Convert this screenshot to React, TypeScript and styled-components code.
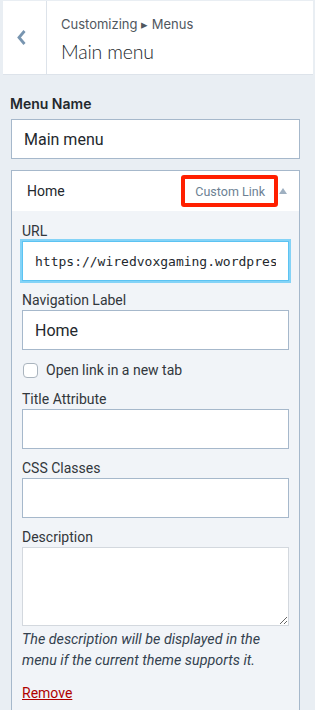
import React from "react";
import styled, { createGlobalStyle } from "styled-components";

const Global = createGlobalStyle`
  html, body { margin: 0; padding: 0; }
  body {
    background: #e9eef3;
    font-family: Roboto, "Noto Sans", "Liberation Sans", sans-serif;
    color: #32373c;
    width: 315px;
    height: 710px;
    overflow: hidden;
  }
  * { box-sizing: border-box; }
`;

const Page = styled.div`
  display: flex;
  flex-direction: column;
  width: 315px;
  height: 710px;
  background: #e9eef3;
`;

const Header = styled.header`
  display: flex;
  height: 74px;
  margin: 1px 2px 0 3px;
  background: #fff;
  border-bottom: 1px solid #dde3ea;
`;

const BackButton = styled.button`
  width: 44px;
  flex: none;
  display: flex;
  align-items: center;
  justify-content: center;
  padding: 0 6px 0 0;
  background: #fff;
  border: none;
  border-right: 1px solid #dde3ea;
  color: #7895b0;
`;

const TitleBlock = styled.div`
  display: flex;
  flex-direction: column;
  padding: 13px 0 0 14px;
`;

const Crumb = styled.span`
  font-family: Inter, Roboto, sans-serif;
  font-size: 13px;
  line-height: 20px;
  color: #50575e;
`;

const Title = styled.h1`
  margin: 5px 0 0;
  font-family: Lato, Roboto, sans-serif;
  font-size: 19.5px;
  line-height: 26px;
  font-weight: 300;
  letter-spacing: -0.2px;
  color: #23282d;
`;

const Content = styled.div`
  display: flex;
  flex-direction: column;
  padding: 19px 15px 0 11px;
  flex: 1;
`;

const SectionLabel = styled.label`
  font-family: Inter, Roboto, sans-serif;
  font-size: 14px;
  line-height: 20px;
  font-weight: 600;
  color: #23282d;
  margin-bottom: 5px;
  margin-left: -1px;
`;

const NameInput = styled.input`
  height: 40px;
  width: 100%;
  border: 1px solid #a6b8cb;
  background: #fff;
  padding: 0 12px;
  font-family: inherit;
  font-size: 16px;
  color: #23282d;
  outline: none;
`;

const ItemPanel = styled.div`
  margin-top: 11px;
  border: 1px solid #a6b8cb;
  border-bottom: none;
  flex: 1;
  display: flex;
  flex-direction: column;
  background: #f1f4f8;
`;

const ItemHeader = styled.div`
  height: 40px;
  background: #fff;
  display: flex;
  align-items: center;
  padding: 0 12px 0 15px;
`;

const ItemTitle = styled.span`
  flex: 1;
  font-size: 14px;
  color: #23282d;
`;

const ItemType = styled.span`
  font-size: 12.5px;
  color: #6c7f93;
  border: 4px solid #ff1f00;
  border-radius: 3px;
  height: 32px;
  display: flex;
  align-items: center;
  padding: 0 9px 0 10px;
  margin-right: 1px;
`;

const Toggle = styled.span`
  width: 0;
  height: 0;
  border-left: 4px solid transparent;
  border-right: 4px solid transparent;
  border-bottom: 6px solid #9fb0c1;
  margin-top: -1px;
`;

const ItemBody = styled.div`
  display: flex;
  flex-direction: column;
  gap: 10px;
  padding: 11px 10px 0 10px;
`;

const Field = styled.div`
  display: flex;
  flex-direction: column;
`;

const FieldLabel = styled.label`
  font-size: 14px;
  line-height: 19px;
  color: #32373c;
`;

const TextInput = styled.input<{ $mono?: boolean; $focused?: boolean }>`
  height: 40px;
  width: 100%;
  background: #fff;
  border: 1px solid ${(p) => (p.$focused ? "#5cc3f2" : "#a6b8cb")};
  box-shadow: ${(p) => (p.$focused ? "0 0 0 2px #84d3f7" : "none")};
  padding: 0 12px;
  font-family: ${(p) =>
    p.$mono ? '"DejaVu Sans Mono", "Liberation Mono", monospace' : "inherit"};
  font-size: ${(p) => (p.$mono ? "13px" : "16px")};
  color: #23282d;
  outline: none;
`;

const TextArea = styled.textarea`
  height: 79px;
  width: 100%;
  background: #fff;
  border: 1px solid #d3d8de;
  resize: vertical;
  font-family: inherit;
  font-size: 14px;
  outline: none;
  display: block;
`;

const CheckRow = styled.label`
  display: flex;
  align-items: center;
  gap: 8px;
  height: 20px;
  font-size: 14px;
  color: #32373c;
  padding-left: 1px;
`;

const Box = styled.span`
  width: 15px;
  height: 15px;
  border: 1px solid #aab4be;
  border-radius: 4px;
  background: #fff;
  flex: none;
`;

const Help = styled.p`
  margin: -7px 0 0;
  font-size: 14.3px;
  line-height: 21px;
  font-style: italic;
  color: #34424f;
`;

const RemoveLink = styled.a`
  margin-top: 2px;
  font-size: 14px;
  line-height: 20px;
  color: #b00000;
  text-decoration: underline;
  align-self: flex-start;
`;

export default function App() {
  return (
    <Page>
      <Global />
      <Header>
        <BackButton aria-label="Back">
          <svg width="11" height="17" viewBox="0 0 11 17">
            <polyline
              points="8.5,2 3,8.5 8.5,15"
              fill="none"
              stroke="currentColor"
              strokeWidth="2.8"
              strokeLinejoin="miter"
            />
          </svg>
        </BackButton>
        <TitleBlock>
          <Crumb>Customizing ▸ Menus</Crumb>
          <Title>Main menu</Title>
        </TitleBlock>
      </Header>
      <Content>
        <SectionLabel>Menu Name</SectionLabel>
        <NameInput defaultValue="Main menu" />
        <ItemPanel>
          <ItemHeader>
            <ItemTitle>Home</ItemTitle>
            <ItemType>Custom Link</ItemType>
            <Toggle />
          </ItemHeader>
          <ItemBody>
            <Field>
              <FieldLabel>URL</FieldLabel>
              <TextInput
                $mono
                $focused
                defaultValue="https://wiredvoxgaming.wordpress.com/"
              />
            </Field>
            <Field>
              <FieldLabel>Navigation Label</FieldLabel>
              <TextInput defaultValue="Home" />
            </Field>
            <CheckRow>
              <Box />
              Open link in a new tab
            </CheckRow>
            <Field>
              <FieldLabel>Title Attribute</FieldLabel>
              <TextInput />
            </Field>
            <Field>
              <FieldLabel>CSS Classes</FieldLabel>
              <TextInput />
            </Field>
            <Field>
              <FieldLabel>Description</FieldLabel>
              <TextArea />
            </Field>
            <Help>
              The description will be displayed in the menu if the current
              theme supports it.
            </Help>
            <RemoveLink href="#">Remove</RemoveLink>
          </ItemBody>
        </ItemPanel>
      </Content>
    </Page>
  );
}
